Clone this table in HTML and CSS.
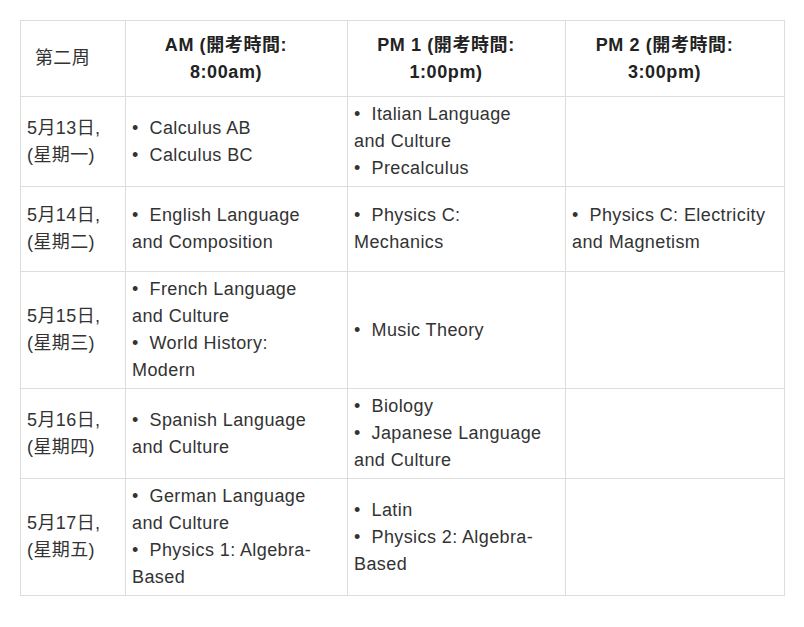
FILE: index.html
```html
<!DOCTYPE html>
<html lang="zh-Hant">
<head>
<meta charset="utf-8">
<link rel="stylesheet" href="styles.css">
</head>
<body>
<table class="schedule">
  <colgroup>
    <col class="c-day">
    <col class="c-am">
    <col class="c-pm1">
    <col class="c-pm2">
  </colgroup>
  <thead>
    <tr class="r-head">
      <th>第二周</th>
      <th>AM (開考時間:<br>8:00am)</th>
      <th>PM 1 (開考時間:<br>1:00pm)</th>
      <th>PM 2 (開考時間:<br>3:00pm)</th>
    </tr>
  </thead>
  <tbody>
    <tr class="r1">
      <td>5月13日,<br>(星期一)</td>
      <td>•&nbsp; Calculus AB<br>•&nbsp; Calculus BC</td>
      <td>•&nbsp; Italian Language<br>and Culture<br>•&nbsp; Precalculus</td>
      <td></td>
    </tr>
    <tr class="r2">
      <td>5月14日,<br>(星期二)</td>
      <td>•&nbsp; English Language<br>and Composition</td>
      <td>•&nbsp; Physics C:<br>Mechanics</td>
      <td>•&nbsp; Physics C: Electricity<br>and Magnetism</td>
    </tr>
    <tr class="r3">
      <td>5月15日,<br>(星期三)</td>
      <td>•&nbsp; French Language<br>and Culture<br>•&nbsp; World History:<br>Modern</td>
      <td>•&nbsp; Music Theory</td>
      <td></td>
    </tr>
    <tr class="r4">
      <td>5月16日,<br>(星期四)</td>
      <td>•&nbsp; Spanish Language<br>and Culture</td>
      <td>•&nbsp; Biology<br>•&nbsp; Japanese Language<br>and Culture</td>
      <td></td>
    </tr>
    <tr class="r5">
      <td>5月17日,<br>(星期五)</td>
      <td>•&nbsp; German Language<br>and Culture<br>•&nbsp; Physics 1: Algebra-<br>Based</td>
      <td>•&nbsp; Latin<br>•&nbsp; Physics 2: Algebra-<br>Based</td>
      <td></td>
    </tr>
  </tbody>
</table>
</body>
</html>
```
FILE: styles.css
```css
html, body {
  margin: 0;
  background: #ffffff;
}
body {
  padding: 20px 0 0 20px;
  font-family: "Liberation Sans", Arial, "Noto Sans CJK TC", sans-serif;
  font-size: 18px;
  line-height: 27px;
  color: #333333;
}
.schedule {
  border-collapse: collapse;
  table-layout: fixed;
  width: 764px;
}
.c-day { width: 105px; }
.c-am { width: 222px; }
.c-pm1 { width: 218px; }
.c-pm2 { width: 219px; }
.schedule th,
.schedule td {
  border: 1px solid #dddddd;
  vertical-align: middle;
  text-align: left;
  padding: 4px 6px;
  white-space: nowrap;
  overflow: hidden;
  letter-spacing: 0.4px;
}
.schedule th {
  text-align: center;
  font-weight: bold;
  color: #222222;
  padding: 10px 27px 10px 6px;
  letter-spacing: 0.6px;
}
.schedule th:first-child {
  font-weight: normal;
  color: #333333;
  letter-spacing: 0.4px;
}
.r-head { height: 76px; }
.r1 { height: 90px; }
.r2 { height: 85px; }
.r3 { height: 117px; }
.r4 { height: 90px; }
.r5 { height: 117px; }
```
